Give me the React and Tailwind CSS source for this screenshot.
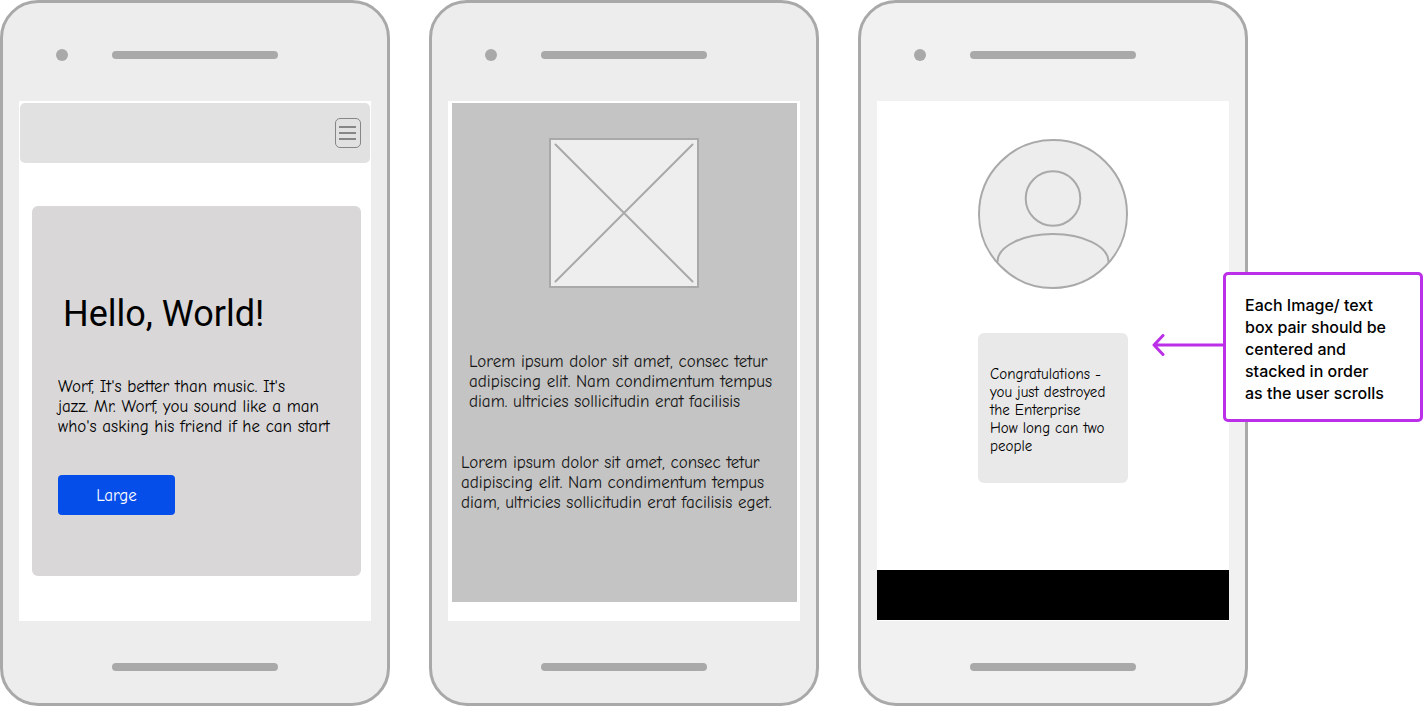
const handwritten =
  "font-['Comic_Neue','Inter',sans-serif] text-[17px] leading-5";

function Phone({ label, shell = "bg-[#ededed]", children }) {
  return (
    <section
      aria-label={label}
      className={`flex min-w-0 flex-col rounded-[38px] border-[3px] border-[#a9a9a9] px-4 ${shell}`}
    >
      <div className="grid h-[98px] grid-cols-[1fr_166px_1fr] items-center pt-1.5">
        <span className="ml-[37px] size-3 rounded-full bg-[#a9a9a9]" />
        <span className="h-2 rounded-full bg-[#a9a9a9]" />
      </div>
      <div className="flex min-h-[520px] flex-col bg-white">{children}</div>
      <div className="flex h-[82px] items-center justify-center pt-2.5">
        <span className="h-2 w-[166px] rounded-full bg-[#a9a9a9]" />
      </div>
    </section>
  );
}

function MenuIcon() {
  return (
    <svg width="26" height="30" viewBox="0 0 26 30" fill="none" stroke="#868686" aria-hidden="true">
      <rect x="0.5" y="0.5" width="25" height="29" rx="4.5" />
      <path d="M4 9h17M4 15h17M4 21h17" strokeWidth="2" />
    </svg>
  );
}

function ImagePlaceholder() {
  return (
    <svg width="150" height="150" viewBox="0 0 150 150" stroke="#a9a9a9" strokeWidth="2" role="img" aria-label="Image placeholder">
      <rect x="1" y="1" width="148" height="148" fill="#eeeeee" />
      <path d="M6.5 6.5l137 137M143.5 6.5l-137 137" strokeLinecap="round" />
    </svg>
  );
}

function Avatar() {
  return (
    <svg width="150" height="150" viewBox="0 0 150 150" fill="#ededed" stroke="#a9a9a9" strokeWidth="2" role="img" aria-label="User avatar">
      <circle cx="75" cy="75" r="74" />
      <circle cx="75" cy="59.5" r="27.3" />
      <path d="M19.6 124V121.5C20.5 107 45 95 75 95s54.5 12 55.4 26.5V124" />
    </svg>
  );
}

function Arrow() {
  return (
    <svg width="71" height="26" viewBox="0 0 71 26" fill="none" stroke="#bb2fe8" strokeWidth="3" strokeLinecap="round" strokeLinejoin="round" aria-hidden="true">
      <path d="M73 11H2M11 1.5L2 11l9 9.5" />
    </svg>
  );
}

export default function App() {
  return (
    <main className="relative bg-white text-black">
      <div className="grid grid-cols-3 gap-[39px] pr-[175px]">
        <Phone label="Landing screen">
          <nav className="mx-px mt-0.5 flex h-[60px] items-center justify-end rounded-[5px] bg-[#e1e1e1] pr-[9px]">
            <button type="button" aria-label="Open menu">
              <MenuIcon />
            </button>
          </nav>
          <article className="mt-[43px] mr-2.5 ml-[13px] flex flex-col items-start rounded-md bg-[#d9d7d8] px-[26px] pt-[87px] pb-[61px]">
            <h1 className="pl-[5px] font-['Roboto',sans-serif] text-[36px] leading-[42px] whitespace-nowrap">
              Hello, World!
            </h1>
            <p className={`mt-[42px] whitespace-nowrap ${handwritten}`}>
              Worf, It's better than music. It's
              <br />
              jazz. Mr. Worf, you sound like a man
              <br />
              who's asking his friend if he can start
            </p>
            <button type="button" className={`mt-[38px] h-10 w-[117px] rounded bg-[#064eea] pt-0.5 text-white ${handwritten}`}>
              Large
            </button>
          </article>
        </Phone>

        <Phone label="Content screen">
          <article className="mt-0.5 mr-[3px] ml-1 flex flex-col bg-[#c4c4c4] pt-[35px] pb-[89px] text-[#151515]">
            <div className="flex justify-center pr-px">
              <ImagePlaceholder />
            </div>
            <p className={`mt-16 pl-[17px] whitespace-nowrap ${handwritten}`}>
              Lorem ipsum dolor sit amet, consec tetur
              <br />
              adipiscing elit. Nam condimentum tempus
              <br />
              diam. ultricies sollicitudin erat facilisis
            </p>
            <p className={`mt-[41px] pl-[9px] whitespace-nowrap ${handwritten}`}>
              Lorem ipsum dolor sit amet, consec tetur
              <br />
              adipiscing elit. Nam condimentum tempus
              <br />
              diam, ultricies sollicitudin erat facilisis eget.
            </p>
          </article>
        </Phone>

        <Phone label="Profile screen" shell="bg-[#f1f1f1]">
          <div className="flex grow flex-col items-center gap-11 pt-[38px]">
            <Avatar />
            <p className="h-[150px] w-[150px] rounded-md bg-[#e9e9e9] px-3 pt-8 font-['Comic_Neue','Inter',sans-serif] text-[15px] leading-[18px] whitespace-nowrap">
              Congratulations -
              <br />
              you just destroyed
              <br />
              the Enterprise
              <br />
              How long can two
              <br />
              people
            </p>
          </div>
          <footer className="mb-px h-[50px] bg-black" />
        </Phone>
      </div>

      <aside className="absolute top-[272px] right-0 flex items-center">
        <Arrow />
        <p className="w-[200px] rounded-[5px] border-[3px] border-[#bb2fe8] bg-white pt-[19px] pb-[15px] pl-[19px] font-['Inter',sans-serif] text-[16px] leading-[22px] font-medium whitespace-nowrap">
          Each Image/ text
          <br />
          box pair should be
          <br />
          centered and
          <br />
          stacked in order
          <br />
          as the user scrolls
        </p>
      </aside>
    </main>
  );
}
